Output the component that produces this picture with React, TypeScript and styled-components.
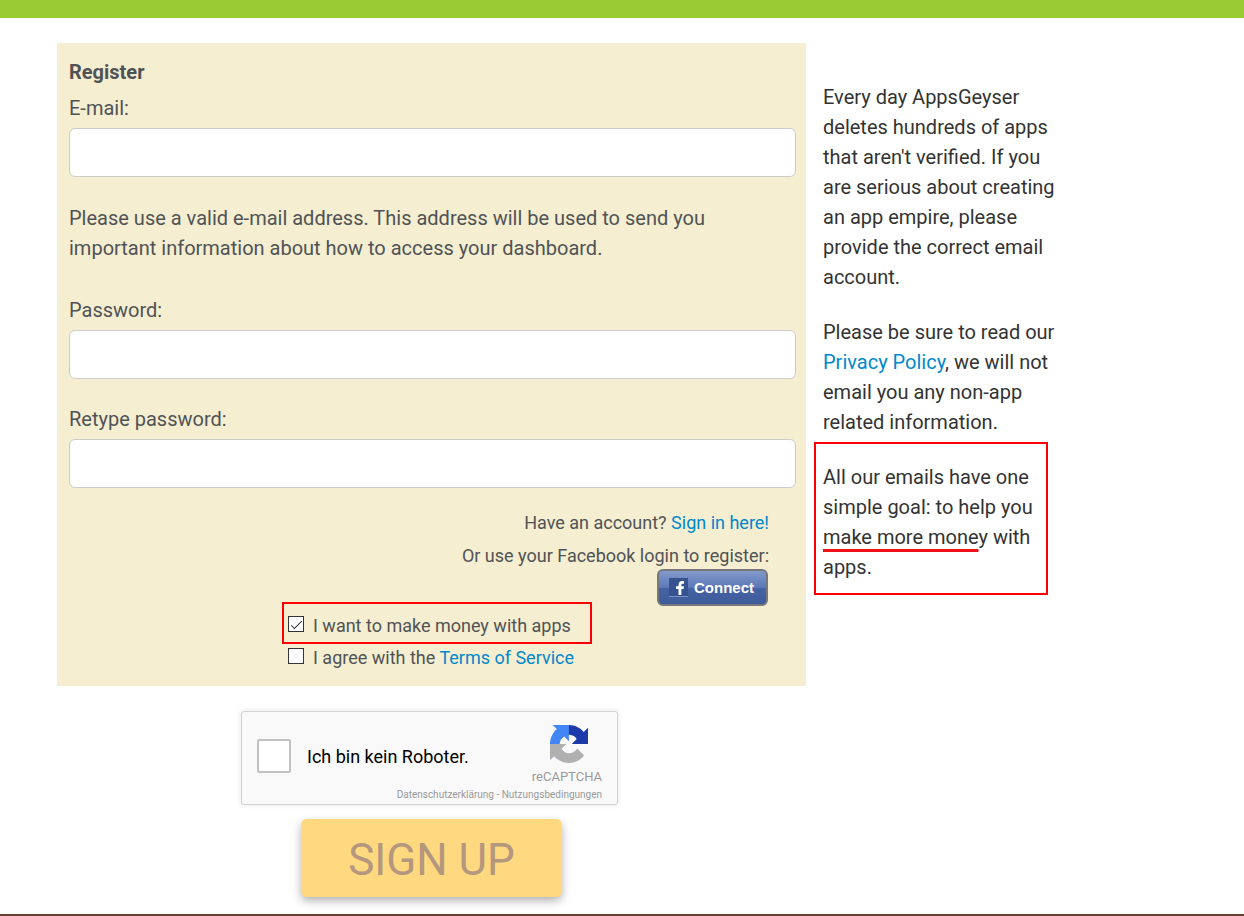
import React from "react";
import styled, { createGlobalStyle, css } from "styled-components";

const GlobalStyle = createGlobalStyle`
  *, *::before, *::after { box-sizing: border-box; }
  body {
    margin: 0;
    background: #fff;
    color: #333;
    font: 400 20px/30px Roboto, "Open Sans", sans-serif;
  }
`;

const marked = css`
  position: relative;
  &::after {
    content: "";
    position: absolute;
    border: 2px solid #fb0007;
    pointer-events: none;
  }
`;

const TopBar = styled.header`
  height: 18px;
  background: #99cc33;
`;

const Page = styled.main`
  display: grid;
  grid-template-columns: minmax(0, 749px) minmax(0, 242px);
  column-gap: 17px;
  max-width: 1130px;
  margin: 25px auto 0;
`;

const Form = styled.form`
  display: flex;
  flex-direction: column;
  align-items: center;
`;

const Panel = styled.section`
  width: 100%;
  padding: 14px 10px 12px 12px;
  background: #f5eed0;
  color: #505356;
`;

const Title = styled.h1`
  margin: 0 0 6px;
  font-size: 20px;
  line-height: 30px;
  font-weight: 700;
`;

const Field = styled.div`
  margin-bottom: 25px;
`;

const FieldLabel = styled.label`
  display: block;
  margin-bottom: 5px;
`;

const TextInput = styled.input`
  display: block;
  width: 100%;
  height: 49px;
  padding: 6px 12px;
  border: 1px solid #ccc;
  border-radius: 6px;
  background: #fff;
  font: inherit;
`;

const Hint = styled.p`
  max-width: 670px;
  margin: 26px 0 32px;
`;

const Link = styled.a`
  color: #0088cc;
  text-decoration: none;
`;

const Alternatives = styled.div`
  display: flex;
  flex-direction: column;
  align-items: flex-end;
  margin-top: -7px;
  padding-right: 27px;
  font-size: 18px;
  line-height: 33px;
`;

const ConnectButton = styled.button`
  display: flex;
  align-items: center;
  gap: 6px;
  width: 111px;
  height: 37px;
  margin: -3px 1px 0 0;
  padding: 0 0 0 10px;
  border: 2px solid #77787c;
  border-radius: 6px;
  background: linear-gradient(#889dcc, #5c78b8 50%, #4664a4 52%, #3d5a9b) border-box;
  color: #fff;
  font: 700 15px/20px "Liberation Sans", sans-serif;
`;

const Agreements = styled.div`
  display: flex;
  flex-direction: column;
  align-items: flex-start;
  width: 293px;
  margin: 4px auto 0 219px;
  font-size: 18px;
  line-height: 32px;
  white-space: nowrap;
`;

const CheckRow = styled.label<{ $marked?: boolean }>`
  display: flex;
  align-items: center;
  gap: 9px;
  width: 100%;
  ${(p) => p.$marked && marked}
  &::after { inset: -8px -11px -2px -6px; }
`;

const CheckBox = styled.input`
  appearance: none;
  display: grid;
  place-items: center;
  width: 16px;
  height: 16px;
  margin: 0 0 4px;
  border: 1px solid #333;
  background: #fff;
  &:checked::before {
    content: "";
    width: 11px;
    height: 5px;
    border: solid #333;
    border-width: 0 0 1px 1px;
    transform: translateY(-1px) rotate(-45deg);
  }
`;

const Captcha = styled.section`
  display: flex;
  align-items: center;
  width: 377px;
  max-width: 100%;
  height: 94px;
  margin: 25px 4px 14px 0;
  padding: 0 15px;
  border: 1px solid #d3d3d3;
  border-radius: 3px;
  background: #f9f9f9;
  box-shadow: 0 0 4px 1px rgba(0, 0, 0, 0.08);
  color: #000;
  font-size: 18px;
`;

const RobotLabel = styled.label`
  display: flex;
  align-items: center;
  gap: 16px;
  flex: none;
  margin-bottom: 4px;
  span { padding-top: 2px; }
`;

const RobotBox = styled.input`
  appearance: none;
  width: 34px;
  height: 34px;
  margin: 0;
  border: 2px solid #c1c1c1;
  border-radius: 2px;
  background: #fff;
`;

const CaptchaBrand = styled.div`
  display: flex;
  flex-direction: column;
  align-items: flex-end;
  flex: 1;
  min-width: 0;
  align-self: stretch;
  padding-top: 13px;
  color: #999;
  white-space: nowrap;
`;

const CaptchaLogo = styled.svg`
  width: 38px;
  height: 38px;
  margin-right: 14px;
`;

const CaptchaName = styled.div`
  margin-top: 5px;
  font-size: 13px;
  line-height: 18px;
`;

const CaptchaLinks = styled.div`
  font-size: 10px;
  line-height: 18px;
  a { color: inherit; text-decoration: none; }
`;

const SignUp = styled.button`
  width: 261px;
  height: 78px;
  margin-bottom: 17px;
  padding: 4px 0 0;
  border: 0;
  border-radius: 6px;
  background: #ffd880;
  box-shadow: 0 4px 10px rgba(0, 0, 0, 0.3);
  color: #b3977e;
  font: 400 44px/60px Roboto, sans-serif;
`;

const Aside = styled.aside`
  padding-top: 39px;
`;

const Note = styled.p<{ $marked?: boolean }>`
  margin: 0 0 25px;
  ${(p) => p.$marked && marked}
  &::after { inset: -20px 17px -13px -9px; }
`;

const Emphasis = styled.span`
  text-decoration: underline 3px #ee1118;
  text-decoration-skip-ink: none;
  text-underline-offset: 5px;
`;

const BottomLine = styled.footer`
  height: 2px;
  background: #64422f;
`;

const FacebookIcon = () => (
  <svg width="19" height="20" viewBox="0 0 19 20" aria-hidden="true">
    <rect width="19" height="19" fill="#36538f" />
    <path d="M0 18.5h19" stroke="#7c92c2" />
    <path
      d="M9.500 17v-6H7V8.300h2.500V7c0-2.900 1.500-4 3.700-4H15v2.700h-1.300c-1 0-1.300.4-1.300 1.300v1.300H15l-.4 2.700h-2.200v6z"
      fill="#fff"
    />
  </svg>
);

const RecaptchaIcon = () => (
  <CaptchaLogo viewBox="0 0 64 64" aria-hidden="true">
    <path fill="#1c3aa9" d="M64 31.955l-.033-1.370V4.687l-7.160 7.160C50.948 4.674 42.033.093 32.050.093c-10.400 0-19.622 4.960-25.458 12.640l11.736 11.860a15.550 15.550 0 0 1 4.754-5.334c2.050-1.600 4.952-2.906 8.968-2.906.485 0 .86.057 1.135.163 4.976.393 9.288 3.140 11.828 7.124l-8.307 8.307L64 31.953" />
    <path fill="#4285f4" d="M31.862.094l-1.370.033H4.594l7.160 7.160C4.580 13.147 0 22.060 0 32.046c0 10.400 4.960 19.622 12.640 25.458L24.500 45.768a15.550 15.550 0 0 1-5.334-4.754c-1.600-2.050-2.906-4.952-2.906-8.968 0-.485.057-.86.163-1.135.393-4.976 3.140-9.288 7.124-11.828l8.307 8.307L31.860.095" />
    <path fill="#b0b0b0" d="M.001 32.045l.033 1.370v25.898l7.160-7.160c5.860 7.173 14.774 11.754 24.760 11.754 10.400 0 19.622-4.960 25.458-12.640l-11.736-11.860a15.550 15.550 0 0 1-4.754 5.334c-2.050 1.600-4.952 2.906-8.968 2.906-.485 0-.86-.057-1.135-.163-4.976-.393-9.288-3.140-11.828-7.124l8.307-8.307c-10.522.04-22.400.066-27.295-.005" />
  </CaptchaLogo>
);

export default function App() {
  return (
    <>
      <GlobalStyle />
      <TopBar />
      <Page>
        <Form onSubmit={(e) => e.preventDefault()}>
          <Panel>
            <Title>Register</Title>
            <Field>
              <FieldLabel htmlFor="email">E-mail:</FieldLabel>
              <TextInput id="email" type="email" />
            </Field>
            <Hint>
              Please use a valid e-mail address. This address will be used to send you important
              information about how to access your dashboard.
            </Hint>
            <Field>
              <FieldLabel htmlFor="password">Password:</FieldLabel>
              <TextInput id="password" type="password" />
            </Field>
            <Field>
              <FieldLabel htmlFor="retype">Retype password:</FieldLabel>
              <TextInput id="retype" type="password" />
            </Field>
            <Alternatives>
              <div>
                Have an account? <Link href="#signin">Sign in here!</Link>
              </div>
              <div>Or use your Facebook login to register:</div>
              <ConnectButton type="button">
                <FacebookIcon />
                Connect
              </ConnectButton>
            </Alternatives>
            <Agreements>
              <CheckRow $marked>
                <CheckBox type="checkbox" defaultChecked />
                <span>I want to make money with apps</span>
              </CheckRow>
              <CheckRow>
                <CheckBox type="checkbox" />
                <span>
                  I agree with the <Link href="#terms">Terms of Service</Link>
                </span>
              </CheckRow>
            </Agreements>
          </Panel>
          <Captcha>
            <RobotLabel>
              <RobotBox type="checkbox" />
              <span>Ich bin kein Roboter.</span>
            </RobotLabel>
            <CaptchaBrand>
              <RecaptchaIcon />
              <CaptchaName>reCAPTCHA</CaptchaName>
              <CaptchaLinks>
                <a href="#datenschutz">Datenschutzerklärung</a> -{" "}
                <a href="#nutzung">Nutzungsbedingungen</a>
              </CaptchaLinks>
            </CaptchaBrand>
          </Captcha>
          <SignUp type="submit">SIGN UP</SignUp>
        </Form>
        <Aside>
          <Note>
            Every day AppsGeyser deletes hundreds of apps that aren't verified. If you are serious
            about creating an app empire, please provide the correct email account.
          </Note>
          <Note>
            Please be sure to read our <Link href="#privacy">Privacy Policy</Link>, we will not
            email you any non-app related information.
          </Note>
          <Note $marked>
            All our emails have one simple goal: to help you <Emphasis>make more mone</Emphasis>y
            with apps.
          </Note>
        </Aside>
      </Page>
      <BottomLine />
    </>
  );
}
